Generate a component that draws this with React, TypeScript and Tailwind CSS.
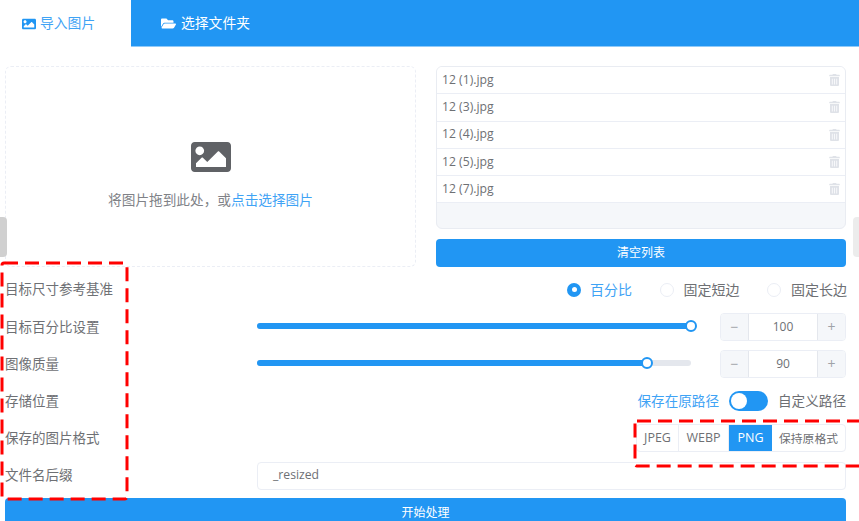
import { FaFolderOpen, FaImage, FaTrashAlt } from 'react-icons/fa'

const FILES = ['12 (1).jpg', '12 (3).jpg', '12 (4).jpg', '12 (5).jpg', '12 (7).jpg']
const FORMATS = [
  { label: 'JPEG', className: 'w-[42px] border-r border-[#ebeef5] text-[12.5px]' },
  { label: 'WEBP', className: 'w-[50px] border-r border-[#ebeef5] text-[12.5px]' },
  { label: 'PNG', className: 'w-[43px] bg-[#2196f3] text-[12.5px] text-white' },
  { label: '保持原格式', className: 'w-[73px] text-[11.8px]' },
]

function FormRow({ label, children }: { label: string; children?: React.ReactNode }) {
  return (
    <div className="flex h-[37.2px] items-center">
      <div className="w-[252px] shrink-0 text-[13.5px] text-[#6e7074]">{label}</div>
      <div className="flex min-w-0 flex-1 items-center justify-end">{children}</div>
    </div>
  )
}

function Radio({ label, checked }: { label: string; checked?: boolean }) {
  return (
    <div className={checked ? 'flex items-center gap-[9px] text-[#3fa3f5]' : 'flex items-center gap-[10px] text-[#6e7074]'}>
      {checked ? (
        <span className="flex h-[14px] w-[14px] items-center justify-center rounded-full bg-[#2196f3]">
          <span className="h-[5px] w-[5px] rounded-full bg-white" />
        </span>
      ) : (
        <span className="h-[14px] w-[14px] rounded-full border border-[#ebeef5] bg-white" />
      )}
      <span className="text-[14px]">{label}</span>
    </div>
  )
}

function SliderRow({ percent, value }: { percent: number; value: number }) {
  return (
    <div className="flex w-full items-center">
      <div className="relative h-[6px] w-[434px] -translate-y-[1px] rounded-full bg-[#e4e7ed]">
        <div className="h-full rounded-full bg-[#2196f3]" style={{ width: `${percent}%` }} />
        <span
          className="absolute top-1/2 h-[12px] w-[12px] -translate-x-1/2 -translate-y-1/2 rounded-full border-2 border-[#2196f3] bg-white"
          style={{ left: `${percent}%` }}
        />
      </div>
      <div className="ml-auto flex h-[28px] w-[126px] overflow-hidden rounded border border-[#ebeef5] text-[12px] text-[#6e7074]">
        <span className="flex w-[28px] items-center justify-center border-r border-[#e4e7ed] bg-[#f5f7fa] text-[14px] text-[#a0a3a8]">−</span>
        <span className="flex flex-1 items-center justify-center">{value}</span>
        <span className="flex w-[28px] items-center justify-center border-l border-[#e4e7ed] bg-[#f5f7fa] text-[14px] text-[#a0a3a8]">+</span>
      </div>
    </div>
  )
}

export default function App() {
  return (
    <div className="relative h-[521px] w-[859px] overflow-hidden bg-white font-['Open_Sans','Noto_Sans_CJK_SC',sans-serif]">
      <div className="flex h-[47px] border-b border-[#90caf9] bg-[#2196f3] text-[13.8px]">
        <div className="flex h-[47px] w-[131px] items-center gap-[4px] bg-white pl-[22px] text-[#3fa3f5]">
          <FaImage className="h-[14px] w-[14px] text-[#2196f3]" />
          <span>导入图片</span>
        </div>
        <div className="flex items-center gap-[5px] pl-[30px] text-white">
          <FaFolderOpen className="h-[15px] w-[15px]" />
          <span>选择文件夹</span>
        </div>
      </div>

      <div className="pl-[5px] pr-[13px] pt-[19px]">
        <div className="flex gap-5">
          <div className="flex h-[201px] w-[411px] flex-col items-center rounded-md border border-dashed border-[#ebeef5] pt-[70px]">
            <FaImage className="h-[40px] w-[40px] text-[#606266]" />
            <div className="mt-[13px] text-[13.67px] text-[#808287]">
              将图片拖到此处，或<span className="text-[#3fa3f5]">点击选择图片</span>
            </div>
          </div>
          <div className="flex flex-1 flex-col">
            <div className="h-[163px] overflow-hidden rounded-md border border-[#e9ecf2] bg-[#f5f7fa]">
              {FILES.map((name) => (
                <div key={name} className="flex h-[27.25px] items-center justify-between border-b border-[#ebeef5] bg-white pl-[5px] pr-[5px] text-[12.2px] text-[#6e7074]">
                  <span>{name}</span>
                  <FaTrashAlt className="h-[12px] w-[11px] text-[#dfe2e8]" />
                </div>
              ))}
            </div>
            <div className="mt-[10px] flex h-[28px] items-center justify-center rounded bg-[#2196f3] text-[12px] text-white">清空列表</div>
          </div>
        </div>

        <div className="mt-[4px]">
          <FormRow label="目标尺寸参考基准">
            <div className="-mr-[1px] flex items-center gap-[27.5px]">
              <Radio label="百分比" checked />
              <Radio label="固定短边" />
              <Radio label="固定长边" />
            </div>
          </FormRow>
          <FormRow label="目标百分比设置">
            <SliderRow percent={100} value={100} />
          </FormRow>
          <FormRow label="图像质量">
            <SliderRow percent={89.8} value={90} />
          </FormRow>
          <FormRow label="存储位置">
            <div className="flex items-center gap-[10px] text-[13.6px]">
              <span className="text-[#3fa3f5]">保存在原路径</span>
              <span className="flex h-[20px] w-[39px] items-center rounded-full bg-[#2196f3] pl-[2px]">
                <span className="h-[16px] w-[16px] rounded-full bg-white" />
              </span>
              <span className="text-[#6e7074]">自定义路径</span>
            </div>
          </FormRow>
          <FormRow label="保存的图片格式">
            <div className="flex h-[28px] overflow-hidden rounded border border-[#ebeef5] text-[#6e7074]">
              {FORMATS.map((format) => (
                <span key={format.label} className={`flex items-center justify-center ${format.className}`}>
                  {format.label}
                </span>
              ))}
            </div>
          </FormRow>
          <FormRow label="文件名后缀">
            <div className="flex h-[28px] w-full items-center rounded border border-[#ebeef5] pl-[15px] text-[12.2px] text-[#6e7074]">_resized</div>
          </FormRow>
        </div>

        <div className="mt-[4px] flex h-[29px] items-center justify-center rounded bg-[#2196f3] text-[12px] text-white">开始处理</div>
      </div>

      <div className="absolute left-0 top-[217px] h-[40px] w-[7px] rounded-r bg-[#d0d0d0]" />
      <div className="absolute right-0 top-[217px] h-[40px] w-[6px] rounded-l bg-[#ececec]" />

      <svg className="pointer-events-none absolute left-0 top-0" width="859" height="521" fill="none" stroke="#ff0000" strokeWidth="3">
        <rect x="2" y="263" width="125" height="236" rx="2" strokeDasharray="14 7" />
        <rect x="635" y="421" width="260" height="45" rx="2" strokeDasharray="14 7" />
      </svg>
    </div>
  )
}
